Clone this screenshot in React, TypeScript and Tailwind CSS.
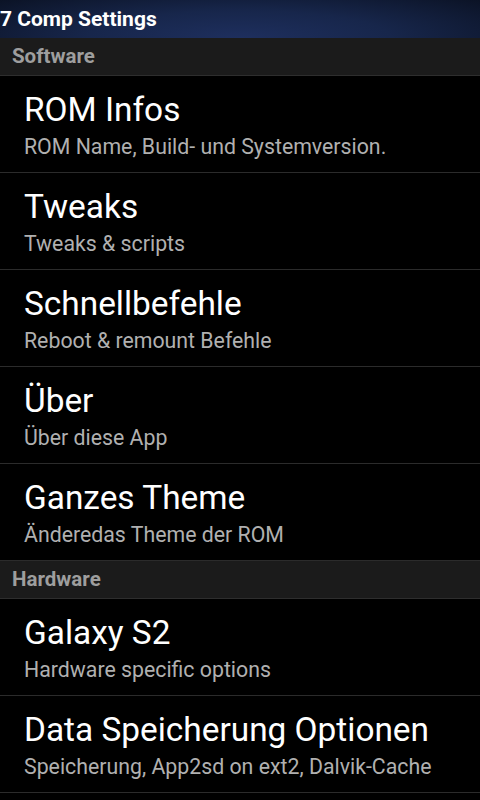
import React from 'react';

interface Entry {
  title: string;
  summary: string;
}

const software: Entry[] = [
  { title: 'ROM Infos', summary: 'ROM Name, Build- und Systemversion.' },
  { title: 'Tweaks', summary: 'Tweaks & scripts' },
  { title: 'Schnellbefehle', summary: 'Reboot & remount Befehle' },
  { title: 'Über', summary: 'Über diese App' },
  { title: 'Ganzes Theme', summary: 'Änderedas Theme der ROM' },
];

const hardware: Entry[] = [
  { title: 'Galaxy S2', summary: 'Hardware specific options' },
  { title: 'Data Speicherung Optionen', summary: 'Speicherung, App2sd on ext2, Dalvik-Cache' },
];

const Category: React.FC<{ label: string }> = ({ label }) => (
  <div className="h-[38px] bg-[#1b1b1b] border-b border-[#2e2e2e] flex items-center pl-3">
    <span className="text-[20.5px] font-bold text-[#9e9e9e] leading-none">{label}</span>
  </div>
);

const Item: React.FC<Entry> = ({ title, summary }) => (
  <div className="h-[97px] border-b border-[#2b2b2b] pl-6 pt-[15px] flex flex-col">
    <span className="text-[33.4px] leading-[38px] text-white whitespace-nowrap">{title}</span>
    <span className="text-[21.3px] leading-[26px] mt-[5px] text-[#b0b0b0] whitespace-nowrap">{summary}</span>
  </div>
);

export default function App() {
  return (
    <div className="w-[480px] h-[800px] bg-black overflow-hidden font-['Roboto',sans-serif]">
      <div className="h-[38px] bg-[radial-gradient(ellipse_70%_160%_at_50%_100%,#1e2f5e_0%,#17264b_45%,#0a1122_100%)] flex items-center">
        <span className="text-[21px] font-bold text-white leading-none">7 Comp Settings</span>
      </div>
      <Category label="Software" />
      {software.map((e) => (
        <Item key={e.title} {...e} />
      ))}
      <Category label="Hardware" />
      {hardware.map((e) => (
        <Item key={e.title} {...e} />
      ))}
    </div>
  );
}
